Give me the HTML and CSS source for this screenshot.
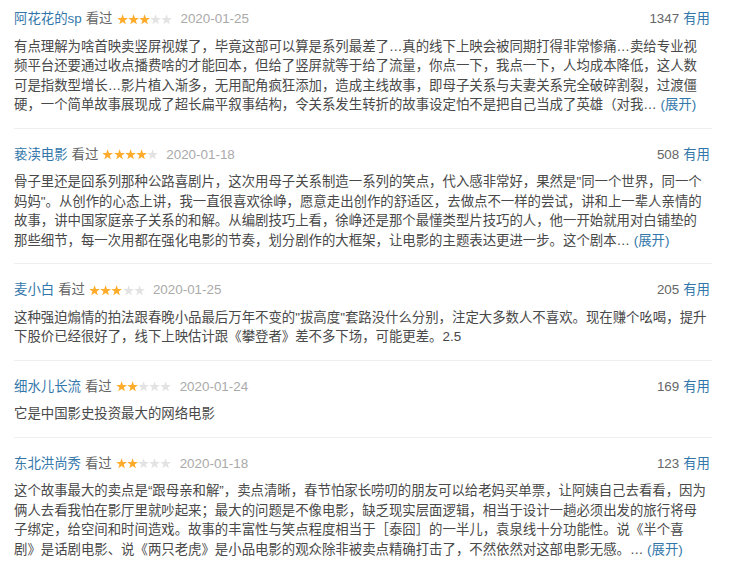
FILE: index.html
```html
<!DOCTYPE html>
<html lang="zh-CN">
<head>
<meta charset="utf-8">
<title>短评</title>
<link rel="stylesheet" href="styles.css">
</head>
<body>
<svg class="defs" width="0" height="0" aria-hidden="true">
  <symbol id="star" viewBox="0 0 11 11">
    <polygon points="5.5,0.2 6.85,3.94 10.83,4.07 7.69,6.51 8.79,10.33 5.5,8.1 2.21,10.33 3.31,6.51 0.17,4.07 4.15,3.94"/>
  </symbol>
</svg>
<div class="comments">
  <div class="comment">
    <div class="head">
      <div class="meta">
        <a class="user">阿花花的sp</a>
        <span class="seen">看过</span>
        <span class="rating">
          <svg class="on"><use href="#star"/></svg><svg class="on"><use href="#star"/></svg><svg class="on"><use href="#star"/></svg><svg class="off"><use href="#star"/></svg><svg class="off"><use href="#star"/></svg>
        </span>
        <span class="date">2020-01-25</span>
      </div>
      <div class="votes"><span class="count">1347</span><a class="useful">有用</a></div>
    </div>
    <p class="text">有点理解为啥首映卖竖屏视媒了，毕竟这部可以算是系列最差了…真的线下上映会被同期打得非常惨痛…卖给专业视<br>频平台还要通过收点播费啥的才能回本，但给了竖屏就等于给了流量，你点一下，我点一下，人均成本降低，这人数<br>可是指数型增长…影片植入渐多，无用配角疯狂添加，造成主线故事，即母子关系与夫妻关系完全破碎割裂，过渡僵<br>硬，一个简单故事展现成了超长扁平叙事结构，令关系发生转折的故事设定怕不是把自己当成了英雄（对我… <a class="more">(展开)</a></p>
  </div>

  <div class="comment">
    <div class="head">
      <div class="meta">
        <a class="user">亵渎电影</a>
        <span class="seen">看过</span>
        <span class="rating">
          <svg class="on"><use href="#star"/></svg><svg class="on"><use href="#star"/></svg><svg class="on"><use href="#star"/></svg><svg class="on"><use href="#star"/></svg><svg class="off"><use href="#star"/></svg>
        </span>
        <span class="date">2020-01-18</span>
      </div>
      <div class="votes"><span class="count">508</span><a class="useful">有用</a></div>
    </div>
    <p class="text">骨子里还是囧系列那种公路喜剧片，这次用母子关系制造一系列的笑点，代入感非常好，果然是"同一个世界，同一个<br>妈妈"。从创作的心态上讲，我一直很喜欢徐峥，愿意走出创作的舒适区，去做点不一样的尝试，讲和上一辈人亲情的<br>故事，讲中国家庭亲子关系的和解。从编剧技巧上看，徐峥还是那个最懂类型片技巧的人，他一开始就用对白铺垫的<br>那些细节，每一次用都在强化电影的节奏，划分剧作的大框架，让电影的主题表达更进一步。这个剧本… <a class="more">(展开)</a></p>
  </div>

  <div class="comment">
    <div class="head">
      <div class="meta">
        <a class="user">麦小白</a>
        <span class="seen">看过</span>
        <span class="rating">
          <svg class="on"><use href="#star"/></svg><svg class="on"><use href="#star"/></svg><svg class="on"><use href="#star"/></svg><svg class="off"><use href="#star"/></svg><svg class="off"><use href="#star"/></svg>
        </span>
        <span class="date">2020-01-25</span>
      </div>
      <div class="votes"><span class="count">205</span><a class="useful">有用</a></div>
    </div>
    <p class="text">这种强迫煽情的拍法跟春晚小品最后万年不变的"拔高度"套路没什么分别，注定大多数人不喜欢。现在赚个吆喝，提升<br>下股价已经很好了，线下上映估计跟《攀登者》差不多下场，可能更差。2.5</p>
  </div>

  <div class="comment">
    <div class="head">
      <div class="meta">
        <a class="user">细水儿长流</a>
        <span class="seen">看过</span>
        <span class="rating">
          <svg class="on"><use href="#star"/></svg><svg class="on"><use href="#star"/></svg><svg class="off"><use href="#star"/></svg><svg class="off"><use href="#star"/></svg><svg class="off"><use href="#star"/></svg>
        </span>
        <span class="date">2020-01-24</span>
      </div>
      <div class="votes"><span class="count">169</span><a class="useful">有用</a></div>
    </div>
    <p class="text">它是中国影史投资最大的网络电影</p>
  </div>

  <div class="comment">
    <div class="head">
      <div class="meta">
        <a class="user">东北洪尚秀</a>
        <span class="seen">看过</span>
        <span class="rating">
          <svg class="on"><use href="#star"/></svg><svg class="on"><use href="#star"/></svg><svg class="off"><use href="#star"/></svg><svg class="off"><use href="#star"/></svg><svg class="off"><use href="#star"/></svg>
        </span>
        <span class="date">2020-01-18</span>
      </div>
      <div class="votes"><span class="count">123</span><a class="useful">有用</a></div>
    </div>
    <p class="text">这个故事最大的卖点是“跟母亲和解”，卖点清晰，春节怕家长唠叨的朋友可以给老妈买单票，让阿姨自己去看看，因为<br>俩人去看我怕在影厅里就吵起来；最大的问题是不像电影，缺乏现实层面逻辑，相当于设计一趟必须出发的旅行将母<br>子绑定，给空间和时间造戏。故事的丰富性与笑点程度相当于［泰囧］的一半儿，袁泉线十分功能性。说《半个喜<br>剧》是话剧电影、说《两只老虎》是小品电影的观众除非被卖点精确打击了，不然依然对这部电影无感。… <a class="more">(展开)</a></p>
  </div>
</div>
</body>
</html>
```

FILE: styles.css
```css
html, body {
  margin: 0;
  padding: 0;
  background: #ffffff;
}

body {
  font-family: "Liberation Sans", "Noto Sans CJK SC", sans-serif;
  font-size: 13.4px;
  color: #494949;
}

.defs {
  position: absolute;
  width: 0;
  height: 0;
  overflow: hidden;
}

.comments {
  width: 698px;
  padding-left: 14px;
}

.comment {
  padding: 16px 0 13px;
  border-bottom: 1px solid #efefef;
}

.comment:first-child {
  padding-top: 9px;
}

.head {
  display: flex;
  justify-content: space-between;
  align-items: center;
  height: 20px;
  line-height: 20px;
}

.meta {
  display: flex;
  align-items: center;
}

.user {
  color: #3377aa;
  margin-right: 4px;
}

.seen {
  color: #666666;
  margin-right: 4px;
}

.rating {
  display: flex;
  align-items: center;
  margin-right: 8px;
}

.rating svg {
  width: 11.2px;
  height: 11px;
  display: block;
}

.rating .on {
  fill: #ffac2d;
}

.rating .off {
  fill: #e3e3e3;
}

.date {
  color: #aaaaaa;
}

.votes {
  display: flex;
  align-items: center;
  padding-right: 2px;
}

.count {
  color: #666666;
  margin-right: 4px;
}

.useful {
  color: #3377aa;
}

.text {
  margin: 7.5px 0 0;
  line-height: 19.5px;
  white-space: nowrap;
}

.more {
  color: #3377aa;
}
```
